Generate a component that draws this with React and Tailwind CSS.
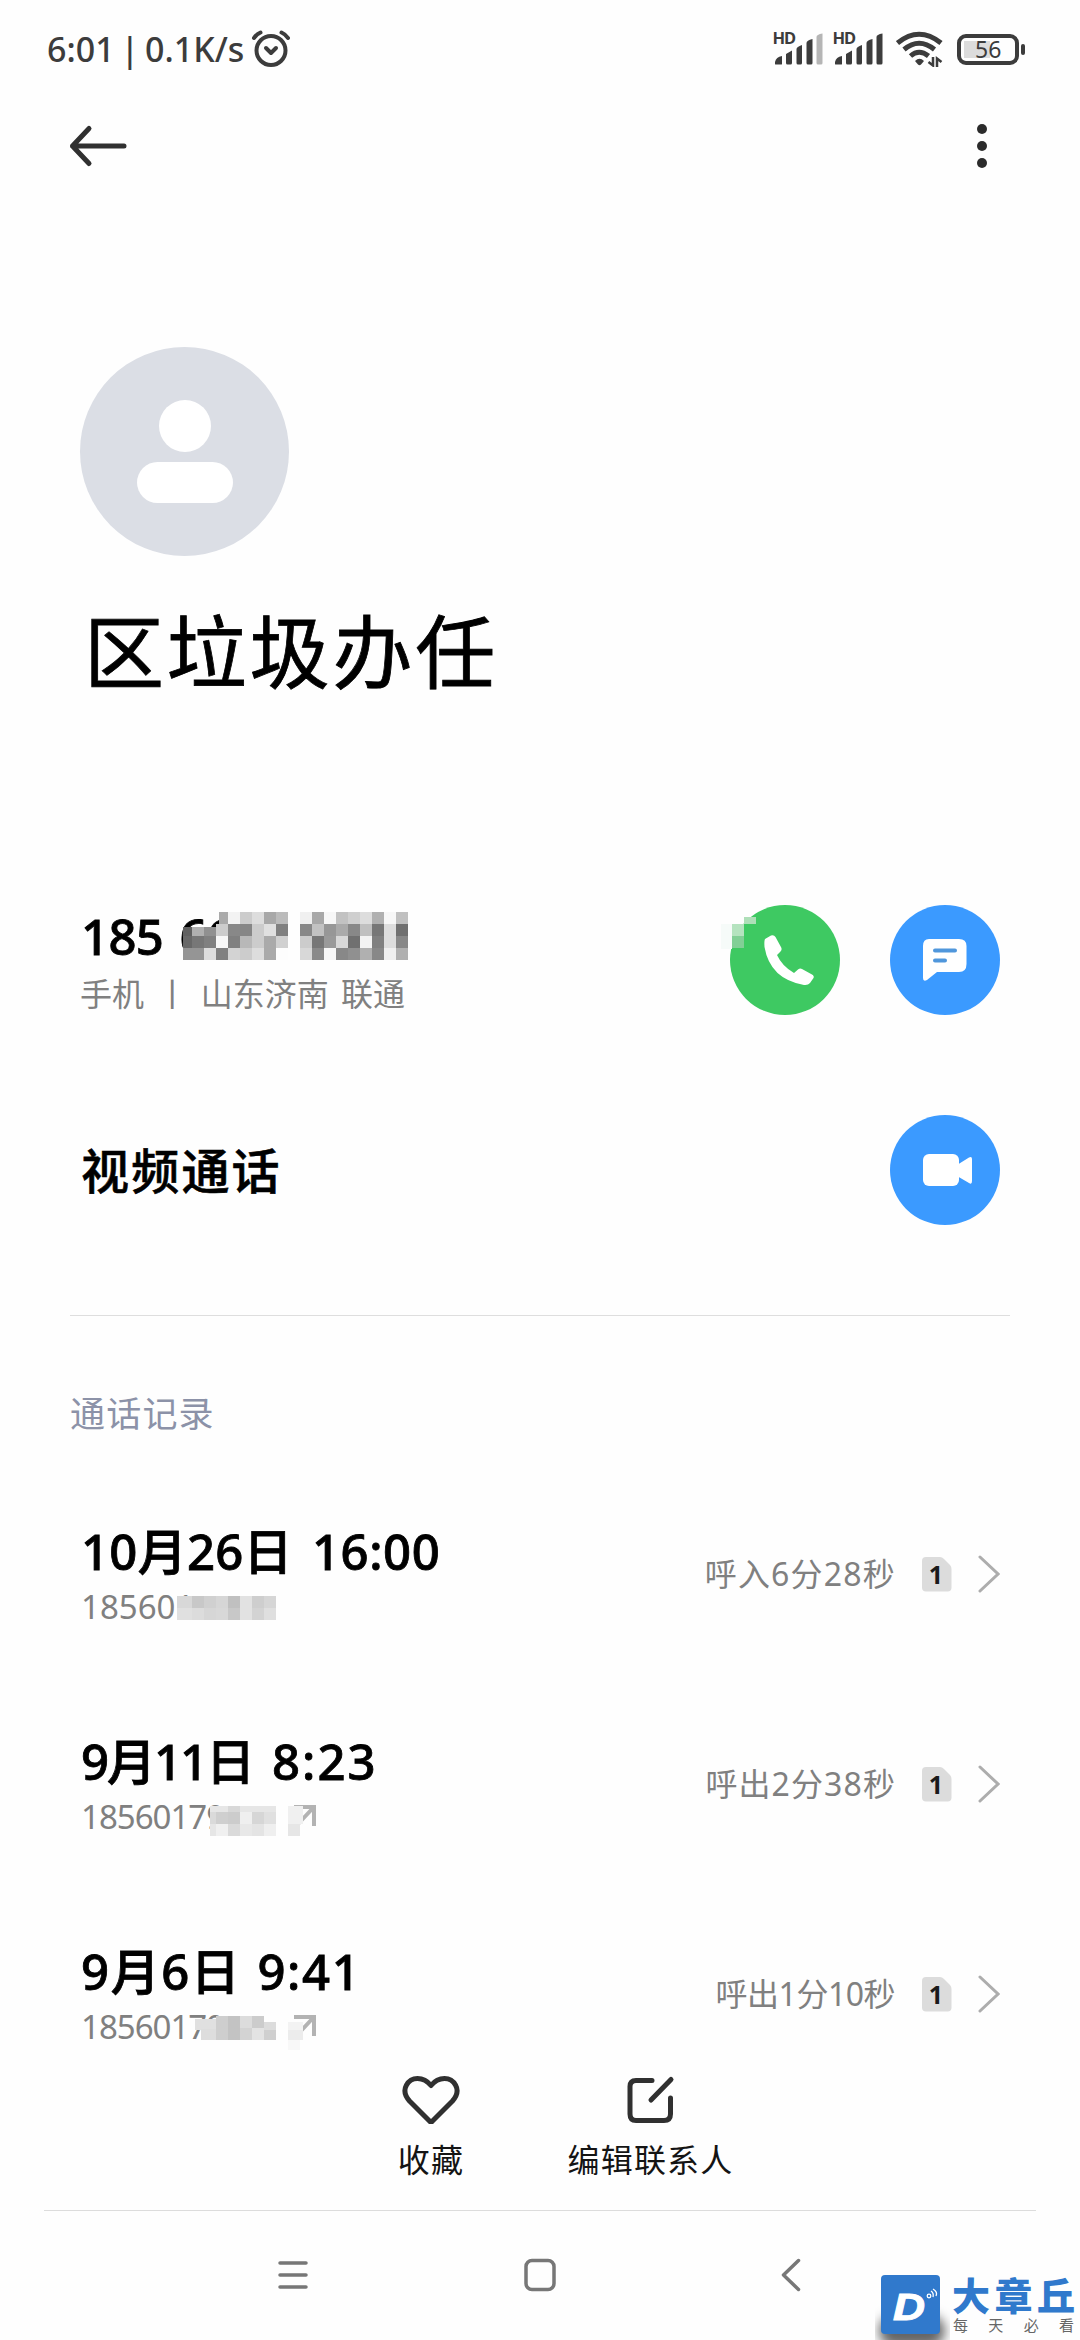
import React from 'react';

const calls = [
  {
    id: 1, day: '10月26日', time: '16:00', number: '185601', duration: '呼入6分28秒', outgoing: false,
    dayStyle: 'tracking-[0.3px]', timeStyle: 'ml-[19px] tracking-[0.6px]', numberStyle: '', durationStyle: 'tracking-[1.2px] -mr-px',
  },
  {
    id: 2, day: '9月11日', time: '8:23', number: '18560179', duration: '呼出2分38秒', outgoing: true,
    dayStyle: 'tracking-[-2px]', timeStyle: 'ml-[19px] tracking-[2px]', numberStyle: 'tracking-[-1px]', durationStyle: 'tracking-[1.1px] -mr-px',
  },
  {
    id: 3, day: '9月6日', time: '9:41', number: '18560179', duration: '呼出1分10秒', outgoing: true,
    dayStyle: 'tracking-[1.6px]', timeStyle: 'ml-[16px] tracking-[1.6px]', numberStyle: 'tracking-[-1px]', durationStyle: 'tracking-[-0.5px]',
  },
];

// [x, y, width, height, color]
const phoneBlocks = [
  [36, 0, 9, 12, '#aaaaaa'], [45, 0, 12, 12, '#f3f3f3'], [57, 0, 12, 12, '#cccccc'], [69, 0, 12, 12, '#dddddd'], [81, 0, 12, 12, '#a8a8a8'], [93, 0, 12, 12, '#bbbbbb'],
  [117, 0, 12, 12, '#f0f0f0'], [129, 0, 12, 12, '#a8a8a8'], [141, 0, 12, 12, '#f7f7f7'], [153, 0, 12, 12, '#c2c2c2'], [165, 0, 12, 12, '#cfcfcf'], [177, 0, 12, 12, '#dddddd'], [189, 0, 12, 12, '#b0b0b0'], [201, 0, 12, 12, '#f7f7f7'], [213, 0, 12, 12, '#c0c0c0'],
  [0, 15, 9, 9, '#606060'], [9, 15, 12, 9, '#b0b0b0'], [21, 15, 12, 9, '#909090'], [33, 12, 12, 12, '#cccccc'], [45, 12, 12, 12, '#888888'], [57, 12, 12, 12, '#868686'], [69, 12, 12, 12, '#cccccc'], [81, 12, 12, 12, '#e0e0e0'], [93, 12, 12, 12, '#808080'],
  [117, 12, 12, 12, '#888888'], [129, 12, 12, 12, '#c2c2c2'], [141, 12, 12, 12, '#979797'], [153, 12, 12, 12, '#aaaaaa'], [165, 12, 12, 12, '#888888'], [177, 12, 12, 12, '#c0c0c0'], [189, 12, 12, 12, '#777777'], [201, 12, 12, 12, '#dddddd'], [213, 12, 12, 12, '#707070'],
  [0, 24, 9, 12, '#686868'], [9, 24, 12, 12, '#777777'], [21, 24, 12, 12, '#808080'], [33, 24, 12, 12, '#f7f7f7'], [45, 24, 12, 12, '#808080'], [57, 24, 12, 12, '#b8b8b8'], [69, 24, 12, 12, '#cccccc'], [81, 24, 12, 12, '#aaaaaa'], [93, 24, 12, 12, '#d0d0d0'],
  [117, 24, 12, 12, '#cccccc'], [129, 24, 12, 12, '#777777'], [141, 24, 12, 12, '#9a9a9a'], [153, 24, 12, 12, '#d8d8d8'], [165, 24, 12, 12, '#707070'], [177, 24, 12, 12, '#f3f3f3'], [189, 24, 12, 12, '#808080'], [201, 24, 12, 12, '#dddddd'], [213, 24, 12, 12, '#888888'],
  [0, 36, 9, 12, '#959595'], [9, 36, 12, 12, '#959595'], [21, 36, 12, 12, '#dddddd'], [33, 36, 12, 12, '#808080'], [45, 36, 12, 12, '#d3d3d3'], [57, 36, 12, 12, '#cccccc'], [69, 36, 12, 12, '#dddddd'], [81, 36, 12, 12, '#aaaaaa'], [93, 36, 12, 12, '#fdfdfd'],
  [117, 36, 12, 12, '#d8d8d8'], [129, 36, 12, 12, '#8a8a8a'], [141, 36, 12, 12, '#f7f7f7'], [153, 36, 12, 12, '#888888'], [165, 36, 12, 12, '#909090'], [177, 36, 12, 12, '#b0b0b0'], [189, 36, 12, 12, '#888888'], [201, 36, 12, 12, '#f0f0f0'], [213, 36, 12, 12, '#b0b0b0'],
];

const callBlocks = {
  1: [
    [96, 0, 15, 12, '#d8d8d8'], [111, 0, 12, 12, '#c8c8c8'], [123, 0, 12, 12, '#d0d0d0'], [135, 0, 12, 12, '#d6d6d6'], [147, 0, 12, 12, '#c0c0c0'], [159, 0, 12, 12, '#e2e2e2'], [171, 0, 12, 12, '#cecece'], [183, 0, 12, 12, '#d6d6d6'],
    [96, 12, 15, 12, '#e0e0e0'], [111, 12, 12, 12, '#dcdcdc'], [123, 12, 12, 12, '#d6d6d6'], [135, 12, 12, 12, '#d8d8d8'], [147, 12, 12, 12, '#c8c8c8'], [159, 12, 12, 12, '#e2e2e2'], [171, 12, 12, 12, '#d3d3d3'], [183, 12, 12, 12, '#dfdfdf'],
  ],
  2: [
    [129, 0, 66, 6, '#e6e6e6'], [147, 0, 12, 6, '#d8d8d8'],
    [129, 6, 6, 12, '#dadada'], [135, 6, 12, 12, '#cfcfcf'], [147, 6, 12, 12, '#cccccc'], [159, 6, 12, 12, '#efefef'], [171, 6, 12, 12, '#d6d6d6'], [183, 6, 12, 12, '#e0e0e0'],
    [129, 18, 6, 12, '#e6e6e6'], [135, 18, 12, 12, '#f0f0f0'], [147, 18, 12, 12, '#dadada'], [159, 18, 12, 12, '#e8e8e8'], [171, 18, 12, 12, '#e4e4e4'], [183, 18, 12, 12, '#efefef'],
    [207, 0, 15, 18, '#f0f0f0'], [207, 18, 12, 12, '#e6e6e6'],
  ],
  3: [
    [114, 3, 21, 11, '#e0e0e0'], [120, 13, 15, 11, '#dddddd'], [135, 0, 12, 24, '#cecece'], [147, 0, 12, 24, '#c3c3c3'], [159, 0, 12, 12, '#dcdcdc'], [159, 12, 12, 12, '#d3d3d3'], [171, 0, 12, 12, '#cccccc'], [171, 12, 12, 12, '#e3e3e3'], [183, 6, 12, 8, '#dcdcdc'], [183, 14, 12, 10, '#cfcfcf'],
    [207, 6, 15, 8, '#f3f3f3'], [207, 14, 15, 10, '#ececec'], [207, 24, 12, 12, '#f8f8f8'],
  ],
};

const Blocks = ({ blocks, width, height, className }) => (
  <svg className={className} width={width} height={height} shapeRendering="crispEdges">
    {blocks.map(([x, y, w, h, fill]) => (
      <rect key={`${x}-${y}`} x={x} y={y} width={w} height={h} fill={fill} />
    ))}
  </svg>
);

const Signal = ({ weak }) => (
  <svg className="overflow-visible" width="51" height="34" viewBox="0 0 51 34" fill="#3c3c3c">
    <text x="-0.500" y="12.300" fontSize="16.500" fontWeight="700" fontFamily="Noto Sans" textLength="23.500">HD</text>
    <path d="M2 32V30Q3 25 9 24V32Q9 32.500 8 32.500H3Q2 32.500 2 32Z" />
    <path d="M13 22L19 18.500V31Q19 32.500 17.500 32.500H14.500Q13 32.500 13 31Z" />
    <path d="M23.500 17Q23.500 15 29 13V31Q29 32.500 27.500 32.500H25Q23.500 32.500 23.500 31Z" />
    <path d="M33.500 11Q33.500 8.500 39.500 7V31Q39.500 32.500 38 32.500H35Q33.500 32.500 33.500 31Z" />
    <path d="M43.500 5Q43.500 2.500 49.500 1.500V31Q49.500 32.500 48 32.500H45Q43.500 32.500 43.500 31Z" fill={weak ? '#b5b5b5' : '#3c3c3c'} />
  </svg>
);

const StatusBar = () => (
  <div className="flex h-[98px] shrink-0 items-center justify-between pl-[47px] pr-[55px] text-[#3c3c3c]">
    <div className="flex items-center">
      <span className="w-[204px] whitespace-nowrap text-[34px] font-medium leading-[40px] [word-spacing:-3px]">6:01 | 0.1K/s</span>
      <svg width="40" height="40" viewBox="0 0 40 40" fill="none" stroke="#3c3c3c" strokeWidth="4" strokeLinecap="round" strokeLinejoin="round">
        <circle cx="20" cy="21.500" r="14.500" />
        <path d="M15 19L20 24L25 19" />
        <path d="M3 9Q5 5.500 9.500 3.500M37 9Q35 5.500 30.500 3.500" />
      </svg>
    </div>
    <div className="flex items-center">
      <Signal weak />
      <div className="w-[9px]" />
      <Signal />
      <svg className="ml-3" width="48" height="36" viewBox="0 0 48 36" fill="none" stroke="#3c3c3c" strokeWidth="5">
        <path d="M1.500 12Q23 -5.500 45 12" />
        <path d="M8 18.500Q23 6 38.500 18.500" />
        <path d="M14.500 25Q23 17.500 32.500 25" />
        <path d="M19 30Q23.500 25.500 28 30L25 33.500Q23.500 35 22 33.500Z" fill="#3c3c3c" stroke="none" />
        <path d="M37 26V34.500L32.500 31M41 36V27.500L45.500 31" strokeWidth="2.500" />
      </svg>
      <div className="ml-[13px] flex items-center">
        <div className="flex h-[31px] w-[62px] items-center rounded-[9px] border-[4px] border-[#3c3c3c] p-[3px]">
          <div className="flex h-[17px] w-[26px] items-center bg-[#dcdcdc] pl-[11px]">
            <span className="text-[23px] leading-none">56</span>
          </div>
        </div>
        <div className="ml-[2px] h-[11px] w-1 rounded-sm bg-[#3c3c3c]" />
      </div>
    </div>
  </div>
);

const CircleButton = ({ color, children }) => (
  <div className={`flex h-[110px] w-[110px] items-center justify-center rounded-full ${color}`}>{children}</div>
);

const CallRow = ({ call }) => (
  <div className="flex h-[210px] items-center justify-between pl-[81px] pr-[80px]">
    <div className="relative">
      <p className="flex whitespace-nowrap text-[49px] font-medium leading-[60px] text-black [-webkit-text-stroke:0.8px]">
        <span className={call.dayStyle}>{call.day}</span>
        <span className={call.timeStyle}>{call.time}</span>
      </p>
      <p className={`h-[48px] text-[33px] leading-[52px] text-[#808080] ${call.numberStyle}`}>{call.number}</p>
      {call.outgoing && (
        <svg className="absolute left-[213px] top-[73px]" width="24" height="24" fill="none" stroke="#b3b3b3" strokeWidth="4">
          <path d="M0 3H20V22M19 4L4 20" />
        </svg>
      )}
      <Blocks className="absolute left-0 top-[75px]" blocks={callBlocks[call.id]} width={225} height={38} />
    </div>
    <div className="flex items-center pb-[2px]">
      <span className={`text-[32px] text-[#808080] ${call.durationStyle}`}>{call.duration}</span>
      <svg className="ml-[27px]" width="30" height="35" viewBox="0 0 30 35">
        <path d="M4 0H18Q20 0 22 2L28 8Q29.500 9.500 29.500 12V30.500Q29.500 34.500 25.500 34.500H4Q0 34.500 0 30.500V4Q0 0 4 0Z" fill="#dcdcdc" />
        <text x="14" y="26.500" textAnchor="middle" fontSize="25" fontWeight="700" fill="#1a1a1a">1</text>
      </svg>
      <svg className="ml-[26px]" width="22" height="40" fill="none" stroke="#adadad" strokeWidth="3" strokeLinecap="round">
        <path d="M2 3L20 20L2 37" />
      </svg>
    </div>
  </div>
);

const BottomActions = () => (
  <div className="flex h-[160px] shrink-0 pt-[18px] text-[32px] tracking-[1.2px] text-[#141414]">
    <div className="ml-[320px] flex w-[222px] flex-col items-center">
      <svg width="60" height="56" viewBox="0 0 60 56" fill="none" stroke="#303030" strokeWidth="5" strokeLinejoin="round">
        <path d="M30 54.500L8.500 33C-2 21 8 10.500 16.500 10.500C22 10.500 26 12.500 30 17.500C34 12.500 38 10.500 43.500 10.500C52 10.500 62 21 51.500 33Z" />
      </svg>
      <span className="mt-[12px] leading-[48px]">收藏</span>
    </div>
    <div className="flex w-[217px] flex-col items-center">
      <svg width="56" height="56" viewBox="0 0 56 56" fill="none" stroke="#303030" strokeWidth="5" strokeLinecap="round">
        <path d="M29 12.500H13Q7 12.500 7 18.500V46Q7 52.500 13 52.500H41Q47.500 52.500 47.500 46V30" />
        <path d="M28 32L48 11.500" />
      </svg>
      <span className="mt-[12px] leading-[48px]">编辑联系人</span>
    </div>
  </div>
);

const Logo = () => (
  <div className="absolute bottom-0 right-0 flex h-[65px] w-[205px]">
    <div className="relative h-[65px] w-[75px] shrink-0 overflow-hidden">
      <div className="absolute left-1 top-10 h-8 w-[66px] rounded-full bg-black/60 blur-[6px]" />
      <svg className="absolute left-[6px] top-0" width="59" height="59" viewBox="0 0 59 59">
        <rect width="59" height="59" rx="4" fill="#3079cc" />
        <text x="12" y="45" fontFamily="Liberation Sans" fontSize="37" fontWeight="700" fontStyle="italic" fill="#fff" stroke="#fff" strokeWidth="1" textLength="32" lengthAdjust="spacingAndGlyphs">D</text>
        <g fill="none" stroke="#fff" strokeWidth="1.300">
          <circle cx="48" cy="21" r="1.800" />
          <path d="M50 16Q53 18 52 22M52 14Q57 17 55 21" />
        </g>
      </svg>
    </div>
    <div className="w-[124px] pl-[2px]">
      <p className="whitespace-nowrap text-[38px] font-black leading-[40px] tracking-[4.500px] text-[#3079cc]">大章丘</p>
      <p className="flex justify-between pl-px text-[15px] leading-[20px] text-[#666]">
        <span>每</span>
        <span>天</span>
        <span>必</span>
        <span>看</span>
      </p>
    </div>
  </div>
);

export default function App() {
  return (
    <div className="relative flex h-[2340px] w-[1080px] flex-col overflow-hidden bg-[#fefefe] font-['Noto_Sans','Noto_Sans_CJK_SC',sans-serif]" lang="zh-CN">
      <StatusBar />
      <div className="flex h-[94px] shrink-0 items-center justify-between pb-px pl-[69px] pr-[93px] pt-[3px]">
        <svg width="60" height="44" fill="none" stroke="#303030" strokeWidth="5" strokeLinecap="round" strokeLinejoin="round">
          <path d="M55 22H3.500M20 4.500L3.500 22L20 39.500" />
        </svg>
        <div className="flex flex-col gap-[7px]">
          <div className="h-[10px] w-[10px] rounded-full bg-[#2b2b2b]" />
          <div className="h-[10px] w-[10px] rounded-full bg-[#2b2b2b]" />
          <div className="h-[10px] w-[10px] rounded-full bg-[#2b2b2b]" />
        </div>
      </div>

      <div className="px-20 pt-[155px]">
        <div className="flex h-[209px] w-[209px] flex-col items-center rounded-full bg-[#dbdee5] pt-[53px]">
          <div className="h-[52px] w-[52px] rounded-full bg-white" />
          <div className="mt-[10px] h-[41px] w-[96px] rounded-full bg-white" />
        </div>
        <h1 className="mt-[36px] h-[120px] whitespace-nowrap pl-[4px] text-[80px] leading-[118px] tracking-[2.800px] text-black [-webkit-text-stroke:0.8px]">区垃圾办任</h1>
      </div>

      <div className="mt-[143px] flex h-[210px] shrink-0 items-center justify-between px-20">
        <div className="relative">
          <p className="whitespace-pre pl-px text-[49px] font-medium leading-[64px] tracking-[-0.600px] text-black [-webkit-text-stroke:0.8px] [word-spacing:4px]">185 66</p>
          <p className="h-[48px] whitespace-pre text-[32px] leading-[52px] text-[#808080] [word-spacing:4px]">手机 丨 山东济南 联通</p>
          <Blocks className="absolute left-[103px] top-[8px]" blocks={phoneBlocks} width={225} height={48} />
        </div>
        <div className="relative flex gap-[50px]">
          <CircleButton color="bg-[#3ec962]">
            <svg className="ml-1" width="60" height="60" viewBox="0 0 60 60" fill="#fff">
              <path d="M8 9L14 5.500Q17 4.500 18.500 7L24.500 18Q25 20 23.500 21.500L20 25Q25 36 37 43L41 39.500Q43 38 45 39L55 44.500Q57.500 46 56.500 48L53 53Q51 55.500 47 55Q13 49 7.500 17Q7 11 8 9Z" />
            </svg>
          </CircleButton>
          <Blocks
            className="absolute -left-[9px] top-[12px]"
            blocks={[[0, 7, 11, 25, '#f6fbf9'], [11, 7, 12, 12, '#b5e3bf'], [11, 19, 12, 12, '#82cf96'], [23, 0, 12, 7, '#aedfb8']]}
            width={40}
            height={34}
          />
          <CircleButton color="bg-[#3b9aff]">
            <svg width="46" height="44" viewBox="0 0 46 44">
              <path d="M7 1H37Q44.500 1 44.500 8V26Q44.500 34 37 34H15L5 42Q1 44 1 40V8Q1 1 7 1Z" fill="#fff" />
              <path d="M13 12.500H33M13 22.500H23" stroke="#5097dc" strokeWidth="4" strokeLinecap="round" />
            </svg>
          </CircleButton>
        </div>
      </div>

      <div className="flex h-[210px] shrink-0 items-center justify-between px-20">
        <p className="pl-px pt-[2px] text-[48px] font-medium leading-[64px] tracking-[2.200px] text-black [-webkit-text-stroke:0.6px]">视频通话</p>
        <CircleButton color="bg-[#3b9aff]">
          <svg className="ml-[5px]" width="50" height="32" viewBox="0 0 50 32" fill="#fff">
            <rect width="36" height="32" rx="6" />
            <path d="M34 11L46 3.500Q49 2 49 5V27Q49 31 46 29L34 22Z" />
          </svg>
        </CircleButton>
      </div>

      <div className="mx-[70px] mt-[40px] h-px shrink-0 bg-[#dedede]" />
      <p className="mt-[72px] h-[53px] shrink-0 pl-[70px] text-[35px] leading-[52px] tracking-[1.200px] text-[#8c92a8]">通话记录</p>

      <div className="mt-[29px] h-[580px] shrink-0 overflow-hidden">
        {calls.map((call) => (
          <CallRow key={call.id} call={call} />
        ))}
      </div>

      <BottomActions />
      <div className="mx-[44px] h-px shrink-0 bg-[#dcdcdc]" />
      <div className="flex h-[128px] shrink-0 items-center pl-[278px]">
        <svg width="524" height="40" viewBox="0 0 524 40" fill="none" stroke="#777" strokeWidth="3.500" strokeLinecap="round" strokeLinejoin="round">
          <path d="M2 8H28M2 20H28M2 32H28" />
          <rect x="248" y="5.500" width="28" height="29" rx="6" />
          <path d="M520.500 5.500L505.500 20L520.500 34.500" />
        </svg>
      </div>
      <Logo />
    </div>
  );
}
